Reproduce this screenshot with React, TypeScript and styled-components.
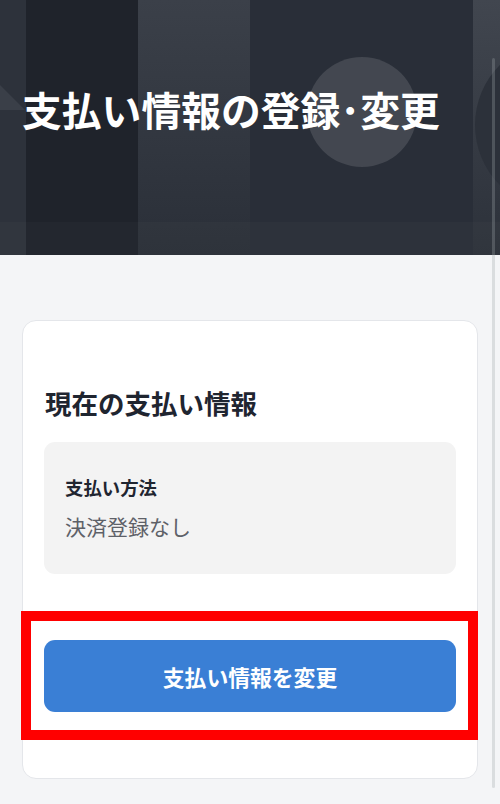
import React from "react";
import styled, { createGlobalStyle } from "styled-components";

const GlobalStyle = createGlobalStyle`
  html, body {
    margin: 0;
    padding: 0;
    background: #f4f5f7;
    font-family: "Noto Sans CJK JP", "Noto Sans", sans-serif;
  }
`;

const Page = styled.div`
  min-height: 804px;
  background: #f4f5f7;
`;

const Hero = styled.header`
  position: relative;
  height: 255px;
  overflow: hidden;
  background: #272c36;
  display: flex;
  align-items: flex-start;
  padding: 80px 0 0 22px;
  box-sizing: border-box;
`;

const HeroArt = styled.svg`
  position: absolute;
  inset: 0;
  width: 100%;
  height: 100%;
`;

const HeroTitle = styled.h1`
  position: relative;
  margin: 0;
  color: #ffffff;
  font-size: 39.8px;
  font-weight: 700;
  line-height: 58px;
  letter-spacing: 0;
  white-space: nowrap;
`;

const Main = styled.main`
  padding: 65px 22px 26px;
`;

const Card = styled.section`
  background: #ffffff;
  border: 1px solid #e4e6ea;
  border-radius: 14px;
  padding: 64px 21px 66px;
  display: flex;
  flex-direction: column;
`;

const CardTitle = styled.h2`
  margin: 0 0 21px 1px;
  font-size: 26.5px;
  font-weight: 700;
  line-height: 36px;
  color: #1f2530;
`;

const InfoBox = styled.div`
  background: #f3f3f3;
  border-radius: 11px;
  padding: 33px 21px 34px;
  display: flex;
  flex-direction: column;
  gap: 13px;
`;

const InfoLabel = styled.div`
  font-size: 18.4px;
  font-weight: 700;
  line-height: 24px;
  color: #1f2530;
`;

const InfoValue = styled.div`
  font-size: 21px;
  font-weight: 400;
  line-height: 28px;
  color: #5e6168;
`;

const ActionArea = styled.div`
  position: relative;
  margin-top: 66px;
`;

const PrimaryButton = styled.button`
  width: 100%;
  height: 72px;
  border: none;
  border-radius: 11px;
  background: #3a7fd5;
  color: #ffffff;
  font-family: inherit;
  font-size: 21.8px;
  font-weight: 700;
  cursor: pointer;
`;

const Highlight = styled.div`
  position: absolute;
  top: -29px;
  bottom: -28px;
  left: -23px;
  right: -22px;
  border: 10px solid #ff0000;
  pointer-events: none;
`;

const ScrollThumb = styled.div`
  position: fixed;
  top: 58px;
  right: 5px;
  width: 3px;
  height: 730px;
  border-radius: 2px;
  background: rgba(160, 164, 170, 0.3);
`;

export default function App() {
  return (
    <>
      <GlobalStyle />
      <Page>
        <Hero>
          <HeroArt viewBox="0 0 500 255" preserveAspectRatio="none">
            <defs>
              <linearGradient id="colB" x1="0" y1="0" x2="0" y2="1">
                <stop offset="0" stopColor="#3b4049" />
                <stop offset="1" stopColor="#2a2f38" />
              </linearGradient>
              <linearGradient id="colR" x1="0" y1="0" x2="0" y2="1">
                <stop offset="0" stopColor="#41464f" />
                <stop offset="1" stopColor="#2c313a" />
              </linearGradient>
            </defs>
            <rect x="0" y="0" width="26" height="255" fill="#2d323b" />
            <polygon points="0,85 25,110 0,110" fill="#3a3f48" />
            <rect x="26" y="0" width="112" height="255" fill="#1f232b" />
            <rect x="138" y="0" width="112" height="255" fill="url(#colB)" />
            <rect x="250" y="0" width="223" height="255" fill="#292e38" />
            <rect x="473" y="0" width="27" height="255" fill="url(#colR)" />
            <circle cx="560" cy="125" r="85" fill="#2c313a" />
            <circle cx="362" cy="112" r="55" fill="#ffffff" fillOpacity="0.12" />
            <rect x="0" y="222" width="500" height="33" fill="#ffffff" fillOpacity="0.02" />
          </HeroArt>
          <HeroTitle>支払い情報の登録･変更</HeroTitle>
        </Hero>
        <Main>
          <Card>
            <CardTitle>現在の支払い情報</CardTitle>
            <InfoBox>
              <InfoLabel>支払い方法</InfoLabel>
              <InfoValue>決済登録なし</InfoValue>
            </InfoBox>
            <ActionArea>
              <PrimaryButton type="button">支払い情報を変更</PrimaryButton>
              <Highlight />
            </ActionArea>
          </Card>
        </Main>
        <ScrollThumb />
      </Page>
    </>
  );
}
